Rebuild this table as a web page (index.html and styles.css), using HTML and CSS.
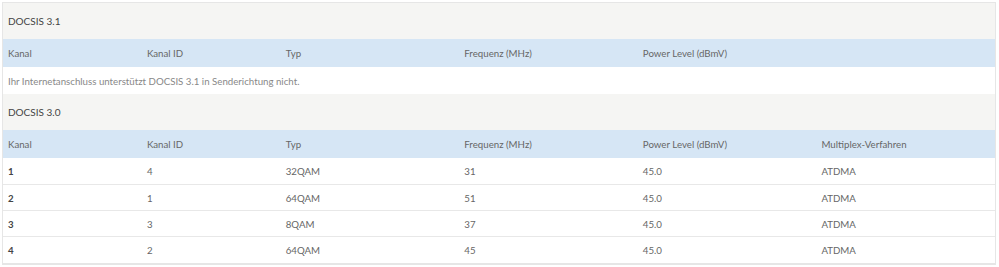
FILE: index.html
```html
<!DOCTYPE html>
<html lang="de">
<head>
<meta charset="utf-8">
<title>DOCSIS</title>
<link rel="stylesheet" href="styles.css">
</head>
<body>
<div class="panel">
  <div class="section-title">DOCSIS 3.1</div>
  <table class="grid">
    <colgroup><col class="c1"><col class="c2"><col class="c3"><col class="c4"><col class="c5"><col class="c6"></colgroup>
    <thead>
      <tr><th>Kanal</th><th>Kanal ID</th><th>Typ</th><th>Frequenz (MHz)</th><th>Power Level (dBmV)</th><th></th></tr>
    </thead>
    <tbody>
      <tr><td class="note" colspan="6">Ihr Internetanschluss unterstützt DOCSIS 3.1 in Senderichtung nicht.</td></tr>
    </tbody>
  </table>
  <div class="section-title">DOCSIS 3.0</div>
  <table class="grid">
    <colgroup><col class="c1"><col class="c2"><col class="c3"><col class="c4"><col class="c5"><col class="c6"></colgroup>
    <thead>
      <tr><th>Kanal</th><th>Kanal ID</th><th>Typ</th><th>Frequenz (MHz)</th><th>Power Level (dBmV)</th><th>Multiplex-Verfahren</th></tr>
    </thead>
    <tbody>
      <tr><td class="num">1</td><td>4</td><td>32QAM</td><td>31</td><td>45.0</td><td>ATDMA</td></tr>
      <tr><td class="num">2</td><td>1</td><td>64QAM</td><td>51</td><td>45.0</td><td>ATDMA</td></tr>
      <tr><td class="num">3</td><td>3</td><td>8QAM</td><td>37</td><td>45.0</td><td>ATDMA</td></tr>
      <tr><td class="num">4</td><td>2</td><td>64QAM</td><td>45</td><td>45.0</td><td>ATDMA</td></tr>
    </tbody>
  </table>
</div>
</body>
</html>
```
FILE: styles.css
```css
html, body {
  margin: 0;
  padding: 0;
  background: #ffffff;
}
body {
  font-family: "Lato", "Open Sans", "Liberation Sans", sans-serif;
  font-size: 9.7px;
  color: #555555;
}
.panel {
  margin: 2px 3px 0 2px;
  border: 1px solid #e6e6e6;
  border-bottom-width: 2px;
}
.section-title {
  height: 36px;
  line-height: 36px;
  padding: 0 5px;
  background: #f5f5f3;
  color: #444444;
  font-size: 10px;
}
.grid {
  width: 100%;
  border-collapse: separate;
  border-spacing: 0;
  table-layout: fixed;
}
.c1, .c2 { width: 14%; }
.c3, .c4, .c5, .c6 { width: 18%; }
.grid th {
  box-sizing: border-box;
  background: #d6e6f5;
  height: 28px;
  padding: 0 5px;
  text-align: left;
  font-weight: normal;
  color: #666666;
}
.grid td {
  box-sizing: border-box;
  height: 26px;
  padding: 0 5px;
  border-bottom: 1px solid #e8e8e8;
  color: #666666;
}
.grid tbody tr:first-child td { height: 27px; }
.grid tbody tr:last-child td { border-bottom: none; }
.grid td.num { font-weight: bold; color: #444444; }
.grid td.note { color: #888888; height: 27px; border-bottom: 1px solid #ececec; }
```
